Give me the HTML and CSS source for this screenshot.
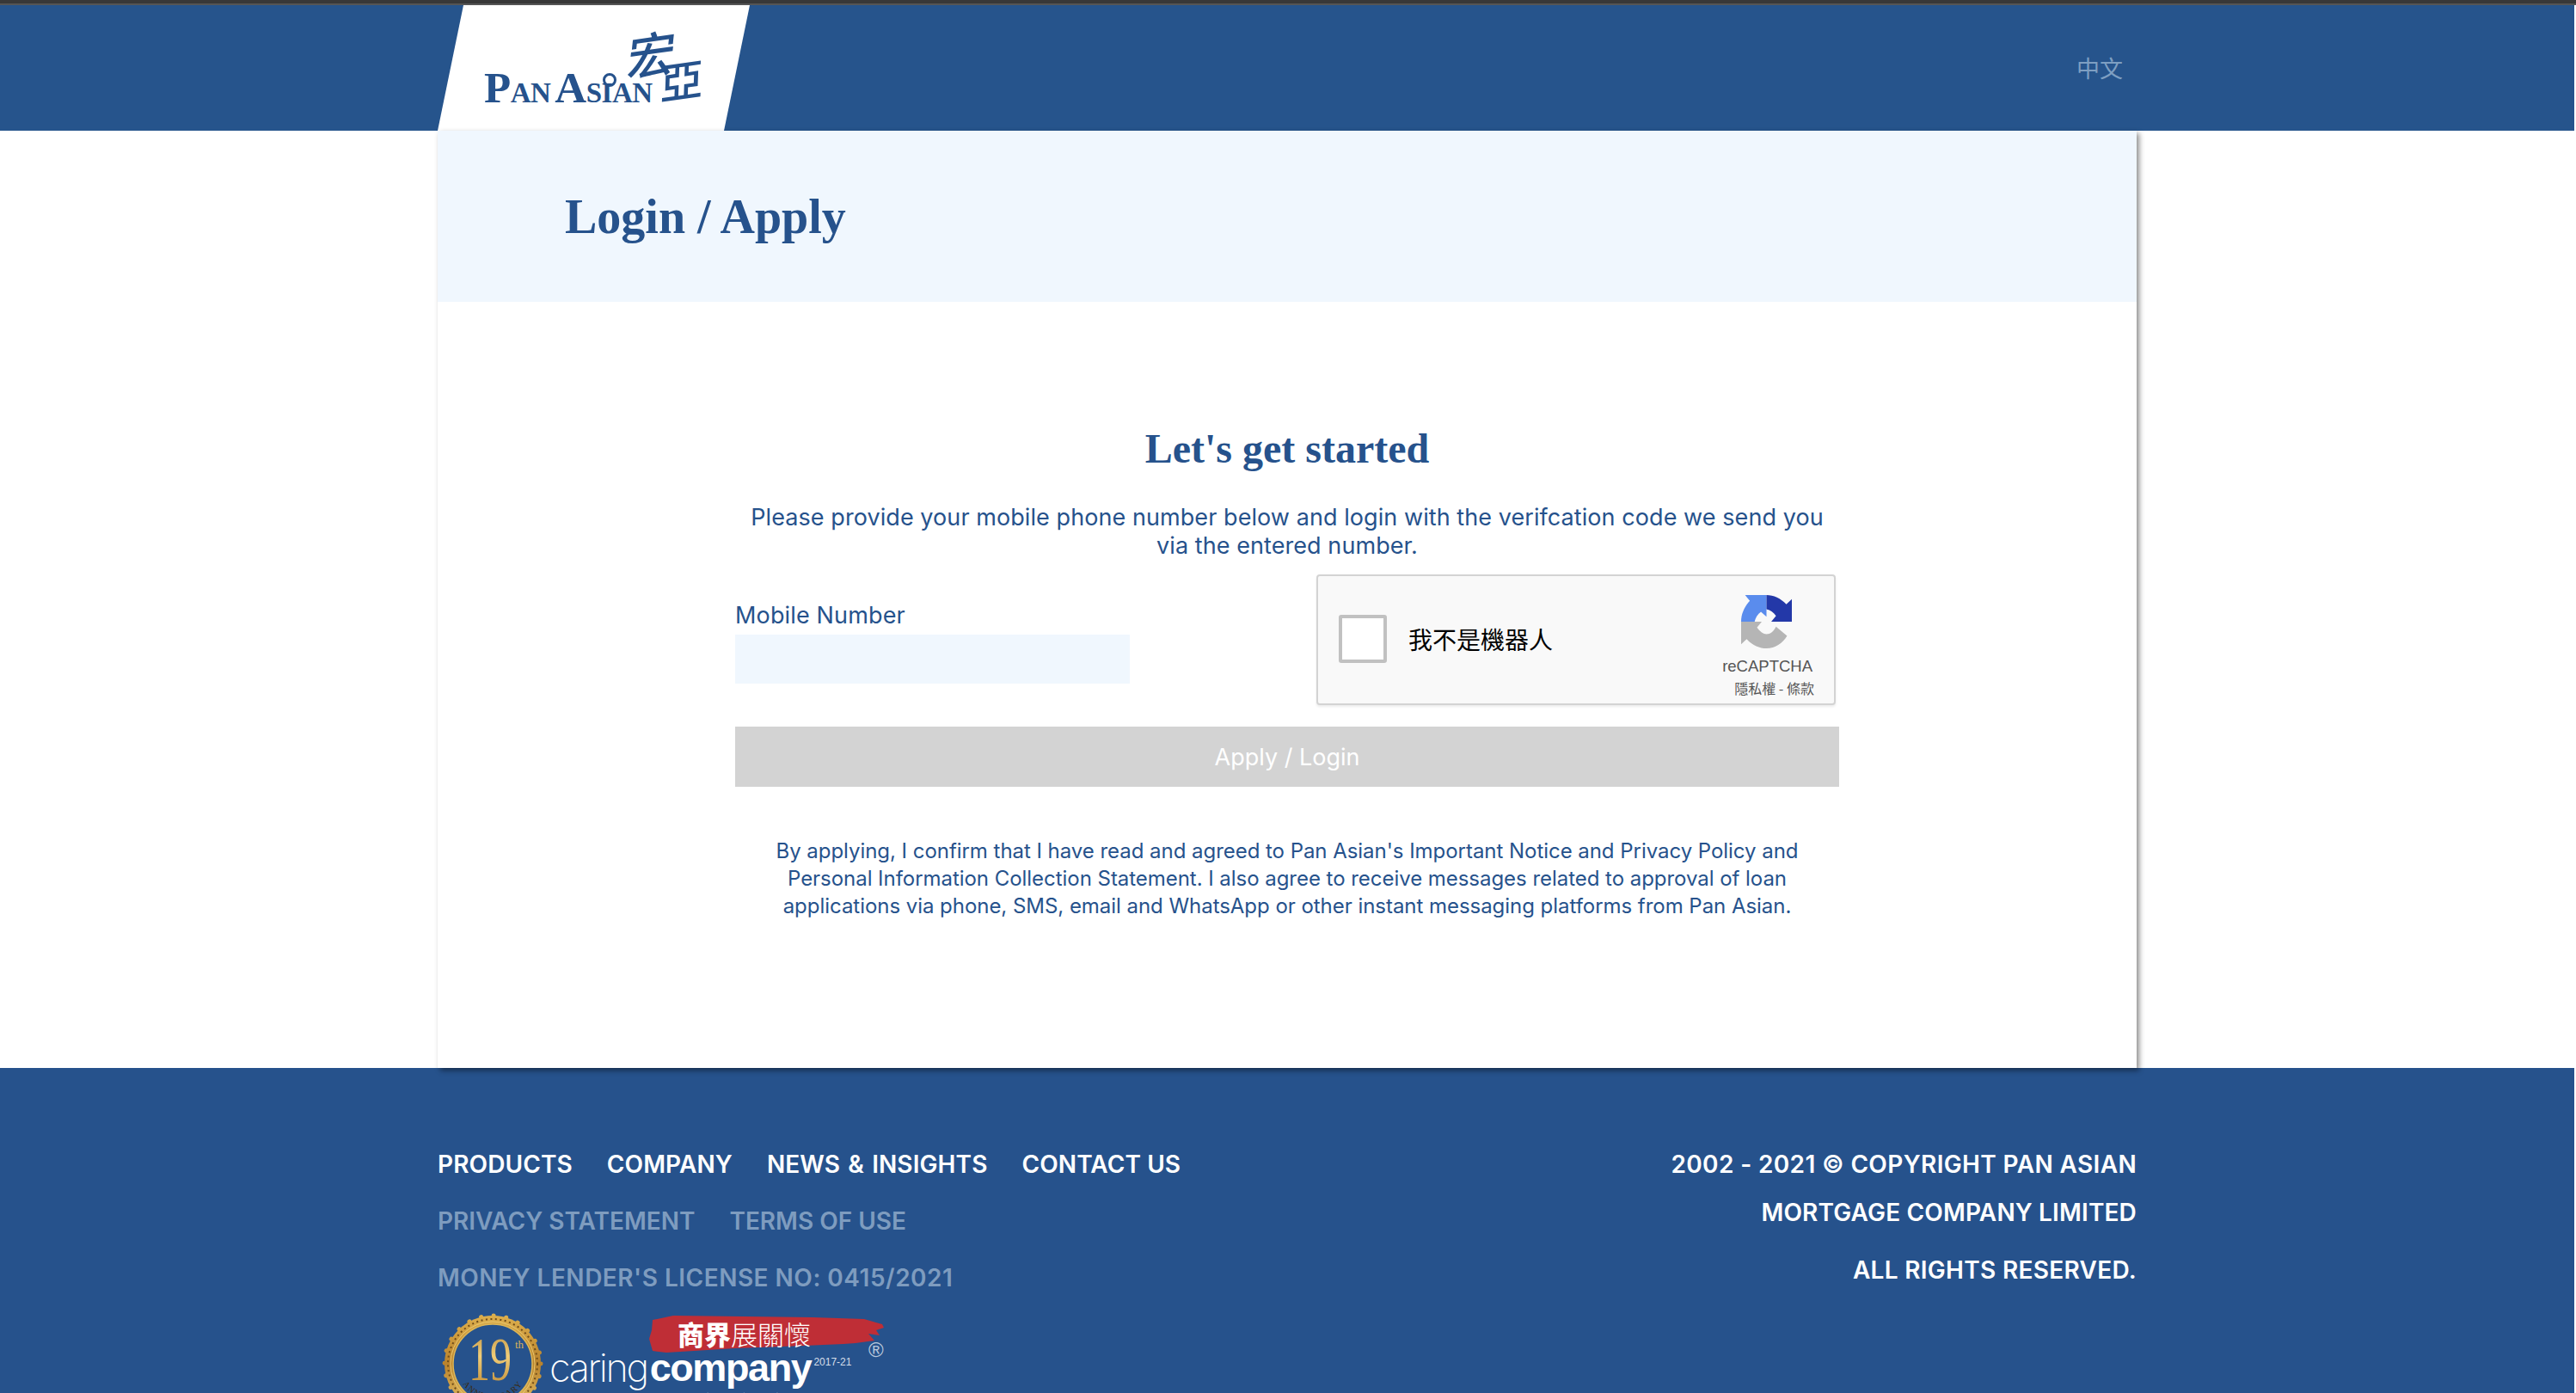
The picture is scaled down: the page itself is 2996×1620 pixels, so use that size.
FILE: index.html
```html
<!DOCTYPE html>
<html lang="en">
<head>
    <meta charset="UTF-8">
    <title>Login / Apply</title>
    <link rel="stylesheet" href="styles.css">
</head>
<body>
    <div class="top-line"></div>
    <header class="site-header">
        <div class="wrap header-inner">
            <a class="logo">
                <span class="logo-cn logo-cn-top">宏</span>
                <span class="logo-cn logo-cn-low">亞</span>
                <span class="logo-en"><b>P</b>AN<i></i><b>A</b>S<span class="logo-dot">I</span>AN</span>
            </a>
            <a class="lang">中文</a>
        </div>
    </header>

    <main class="wrap panel">
        <div class="hero"><h1>Login / Apply</h1></div>
        <div class="form-area">
            <h2>Let's get started</h2>
            <p class="intro">Please provide your mobile phone number below and login with the verifcation code we send you via the entered number.</p>
            <div class="form-row">
                <div class="field">
                    <label for="mobile">Mobile Number</label>
                    <input id="mobile" type="text">
                </div>
                <div class="captcha">
                    <span class="captcha-box"></span>
                    <span class="captcha-text">我不是機器人</span>
                    <div class="captcha-brand">
                        <svg class="captcha-icon" viewBox="0 0 64 64" width="59" height="62" preserveAspectRatio="none">
                            <path fill="#b5b5b5" d="M0 32H26L20 39C24 44 28 47 32 47C37 47 41 44 44 38L58 49C52 58 43 64 32 64C23 64 14 60 7 53L0 59Z"/>
                            <path fill="#5a8ced" d="M0 32C0 23 4 14 11 7L5 0H32V26L25 20C21 23 18 27 17 32Z"/>
                            <path fill="#2338a8" d="M32 0C41 0 50 4 57 11L64 5V32H38L44 25C41 21 37 18 32 17Z"/>
                        </svg>
                        <span class="captcha-name">reCAPTCHA</span>
                        <span class="captcha-links">隱私權 - 條款</span>
                    </div>
                </div>
            </div>
            <button class="submit" type="button">Apply / Login</button>
            <p class="notice">By applying, I confirm that I have read and agreed to Pan Asian's Important Notice and Privacy Policy and Personal Information Collection Statement. I also agree to receive messages related to approval of loan applications via phone, SMS, email and WhatsApp or other instant messaging platforms from Pan Asian.</p>
        </div>
    </main>

    <footer class="site-footer">
        <div class="wrap footer-inner">
            <div class="footer-left">
                <ul class="foot-nav">
                    <li>Products</li>
                    <li>Company</li>
                    <li class="news">News &amp; Insights</li>
                    <li>Contact Us</li>
                </ul>
                <ul class="foot-nav dim">
                    <li>Privacy Statement</li>
                    <li>Terms of Use</li>
                </ul>
                <div class="foot-nav dim license">Money Lender's License No: 0415/2021</div>
                <div class="badges">
                    <svg class="medal" viewBox="0 0 118 118" width="118" height="118">
                        <defs>
                            <linearGradient id="gold" x1="0" y1="0" x2="0" y2="1">
                                <stop offset="0" stop-color="#dcae4c"/>
                                <stop offset="0.5" stop-color="#b9822c"/>
                                <stop offset="1" stop-color="#e6c468"/>
                            </linearGradient>
                            <linearGradient id="goldText" x1="0" y1="0" x2="0" y2="1">
                                <stop offset="0" stop-color="#b98a3a"/>
                                <stop offset="0.45" stop-color="#f0cd78"/>
                                <stop offset="1" stop-color="#b9822c"/>
                            </linearGradient>
                            <path id="medalArc" d="M17 59A42 42 0 0 0 101 59"/>
                        </defs>
                        <circle cx="59" cy="59" r="56" fill="url(#gold)" stroke="url(#gold)" stroke-width="5" stroke-dasharray="0.1 14.6" stroke-linecap="round"/>
                        <circle cx="59" cy="59" r="52" fill="none" stroke="#6e4c1a" stroke-width="2" stroke-dasharray="2 3.5"/>
                        <circle cx="59" cy="59" r="46" fill="#26528c" stroke="#dcb658" stroke-width="1.5"/>
                        <circle cx="59" cy="59" r="49" fill="none" stroke="#e8c870" stroke-width="1"/>
                        <text x="56" y="78" class="medal-num" fill="url(#goldText)" textLength="50" lengthAdjust="spacingAndGlyphs">19</text>
                        <text x="85" y="41" class="medal-th">th</text>
                        <text class="medal-arc"><textPath href="#medalArc" startOffset="50%">ANNIVERSARY</textPath></text>
                    </svg>
                    <div class="caring">
                        <div class="brush">
                            <svg class="brush-shape" viewBox="0 0 273 44" width="273" height="44">
                                <path fill="#bf2e36" d="M4 6L28 1L110 2L190 3L250 5L271 11L273 15L264 18L268 24L255 22L262 30L240 33L226 34L180 36L100 39L20 44L4 42L0 28L3 18Z"/>
                            </svg>
                            <span class="brush-text"><b>商界</b>展關懷</span>
                        </div>
                        <div class="caring-name"><span class="caring-thin">caring</span><b>company</b><span class="caring-year">2017-21</span></div>
                        <span class="reg">®</span>
                        <div class="caring-note">Awarded by The Hong Kong Council of Social Service</div>
                    </div>
                </div>
            </div>
            <div class="footer-right">
                <p class="copy">2002 - 2021 © Copyright Pan Asian</p>
                <p>Mortgage Company Limited</p>
                <p class="rights">All Rights Reserved.</p>
            </div>
        </div>
    </footer>
</body>
</html>
```

FILE: styles.css
```css
* {
    box-sizing: border-box;
}

html, body {
    height: 1620px;
    overflow: hidden;
}

body {
    margin: 0;
    background-color: #ffffff;
    color: #26528c;
    font-family: Inter, Roboto, "Noto Sans CJK TC", sans-serif;
}

.wrap {
    width: 1976px;
    margin-left: 509px;
}

.top-line {
    height: 6px;
    background-color: #383838;
    border-bottom: 2px solid #555555;
}

.site-header {
    height: 146px;
    margin-right: 2px;
    background-color: #26548c;
}

.header-inner {
    display: flex;
    justify-content: space-between;
    align-items: center;
    height: 100%;
}

.logo {
    position: relative;
    display: block;
    width: 363px;
    height: 146px;
    background-color: #ffffff;
    clip-path: polygon(30px 0, 100% 0, 333px 100%, 0 100%);
    color: #26528c;
}

.logo-en {
    position: absolute;
    left: 54px;
    top: 72px;
    font-family: "Liberation Serif", serif;
    font-size: 33px;
    font-weight: bold;
    letter-spacing: -0.5px;
    line-height: 48px;
    white-space: nowrap;
}

.logo-en b {
    font-size: 51px;
}

.logo-en i {
    display: inline-block;
    width: 5px;
}

.logo-dot {
    position: relative;
}

.logo-dot::before {
    content: "";
    position: absolute;
    left: 1px;
    top: -5px;
    width: 10px;
    height: 10px;
    border: 3px solid #26528c;
    border-radius: 50%;
}

.logo-cn {
    position: absolute;
    font-family: "Noto Sans CJK TC", sans-serif;
    font-weight: 500;
    line-height: 1;
}

.logo-cn-top {
    left: 221px;
    top: 27px;
    font-size: 56px;
    transform: rotate(-8deg) skewX(-14deg);
}

.logo-cn-low {
    left: 259px;
    top: 60px;
    font-size: 50px;
    transform: rotate(-8deg) skewX(-10deg);
}

.lang {
    margin: 0 16px 2px 0;
    color: #7e9fc2;
    font-family: "Noto Sans CJK TC", sans-serif;
    font-size: 27px;
}

.panel {
    position: relative;
    height: 1090px;
    box-shadow: 3px 3px 6px rgba(0, 0, 0, 0.45);
}

.hero {
    display: flex;
    align-items: center;
    height: 199px;
    padding-left: 148px;
    background-color: #f0f7fe;
}

.hero h1 {
    margin: 0;
    font-family: "Liberation Serif", serif;
    font-size: 56px;
    font-weight: bold;
}

.form-area {
    width: 1284px;
    margin-left: 346px;
    padding-top: 144px;
    text-align: center;
}

.form-area h2 {
    margin: 0;
    font-family: "Liberation Serif", serif;
    font-size: 48px;
    font-weight: bold;
    line-height: 54px;
}

.intro {
    margin: 36px 0 0;
    font-size: 27px;
    letter-spacing: 0.07px;
    line-height: 33px;
}

.form-row {
    display: flex;
    justify-content: space-between;
    margin-top: 17px;
    text-align: left;
}

.field {
    width: 459px;
    padding-top: 26px;
}

.field label {
    display: block;
    font-size: 27px;
    letter-spacing: 0.15px;
    line-height: 44px;
}

.field input {
    display: block;
    width: 100%;
    height: 57px;
    border: 0;
    background-color: #f0f7fe;
}

.captcha {
    position: relative;
    display: flex;
    align-items: center;
    width: 604px;
    height: 152px;
    margin-right: 4px;
    padding: 0 0 3px 24px;
    background-color: #f9f9f9;
    border: 2px solid #d3d3d3;
    border-radius: 4px;
    box-shadow: 0 2px 3px rgba(0, 0, 0, 0.08);
}

.captcha-box {
    width: 56px;
    height: 56px;
    background-color: #ffffff;
    border: 4px solid #c1c1c1;
    border-radius: 3px;
}

.captcha-text {
    margin-left: 25px;
    color: #000000;
    font-family: "Noto Sans CJK TC", sans-serif;
    font-size: 28px;
}

.captcha-brand {
    position: absolute;
    right: 23px;
    top: 22px;
    display: flex;
    flex-direction: column;
    align-items: flex-end;
    color: #555555;
}

.captcha-icon {
    margin-right: 26px;
}

.captcha-name {
    margin: 8px 2px 0 0;
    font-family: "Liberation Sans", sans-serif;
    font-size: 18.5px;
    line-height: 26px;
}

.captcha-links {
    font-family: "Noto Sans CJK TC", sans-serif;
    font-size: 16px;
    line-height: 24px;
    white-space: nowrap;
}

.submit {
    display: block;
    width: 100%;
    height: 70px;
    margin-top: 25px;
    border: 0;
    background-color: #d3d3d3;
    color: #ffffff;
    font-family: Inter, sans-serif;
    font-size: 27px;
}

.notice {
    margin: 59px 0 0;
    padding: 0 30px;
    font-size: 24px;
    letter-spacing: -0.04px;
    line-height: 32px;
}

.site-footer {
    height: 378px;
    margin-right: 2px;
    background-color: #26528c;
    overflow: hidden;
}

.footer-inner {
    display: flex;
    justify-content: space-between;
    padding-top: 96px;
}

.foot-nav {
    display: flex;
    gap: 40px;
    margin: 0 0 34px;
    padding: 0;
    list-style: none;
    color: #ffffff;
    font-size: 28px;
    font-weight: 600;
    letter-spacing: 0.1px;
    line-height: 32px;
    text-transform: uppercase;
}

.foot-nav .news {
    word-spacing: 2px;
}

.foot-nav.dim {
    color: #7e9cbf;
    letter-spacing: 0;
}

.foot-nav.license {
    letter-spacing: 0.5px;
}

.badges {
    display: flex;
    margin: -9px 0 0 5px;
}

.medal {
    flex: none;
}

.medal-num {
    font-family: "Liberation Serif", serif;
    font-size: 71px;
    text-anchor: middle;
}

.medal-th {
    fill: #d9b25c;
    font-family: "Liberation Serif", serif;
    font-size: 13px;
}

.medal-arc {
    fill: #3a2a10;
    font-family: "Liberation Serif", serif;
    font-size: 10px;
    letter-spacing: 1px;
    text-anchor: middle;
}

.caring {
    position: relative;
    width: 400px;
    margin-left: 7px;
    padding-top: 2px;
    color: #ffffff;
}

.brush {
    position: relative;
    width: 273px;
    height: 44px;
    margin-left: 116px;
    padding-left: 33px;
    color: #ffffff;
    font-family: "Noto Sans CJK TC", sans-serif;
    font-size: 31px;
    font-weight: 300;
    line-height: 44px;
}

.brush b {
    font-weight: 900;
}

.brush-shape {
    position: absolute;
    left: 0;
    top: 0;
}

.brush-text {
    position: relative;
}

.caring-name {
    display: flex;
    align-items: flex-start;
    height: 48px;
    margin-top: -4px;
    font-family: "Liberation Sans", sans-serif;
    font-size: 45px;
    line-height: 44px;
    white-space: nowrap;
}

.caring-name b {
    letter-spacing: -1.4px;
}

.caring-thin {
    margin-right: 3px;
    font-family: Inter, sans-serif;
    font-weight: 200;
    letter-spacing: -2.4px;
}

.caring-year {
    margin: 8px 0 0 3px;
    color: #d6dfea;
    font-family: "Liberation Sans", sans-serif;
    font-size: 12px;
    line-height: 14px;
}

.reg {
    position: absolute;
    left: 371px;
    top: 28px;
    color: #b9c8dc;
    font-family: "Liberation Sans", sans-serif;
    font-size: 24px;
    line-height: 30px;
}

.caring-note {
    font-size: 11px;
    line-height: 16px;
    white-space: nowrap;
}

.footer-right {
    color: #ffffff;
    font-size: 28px;
    font-weight: 600;
    letter-spacing: 0.15px;
    line-height: 32px;
    text-align: right;
    text-transform: uppercase;
}

.footer-right p {
    margin: 0 0 24px;
}

.footer-right .copy {
    letter-spacing: 0.36px;
}

.footer-right .rights {
    margin-top: 35px;
    letter-spacing: 0.3px;
}
```
